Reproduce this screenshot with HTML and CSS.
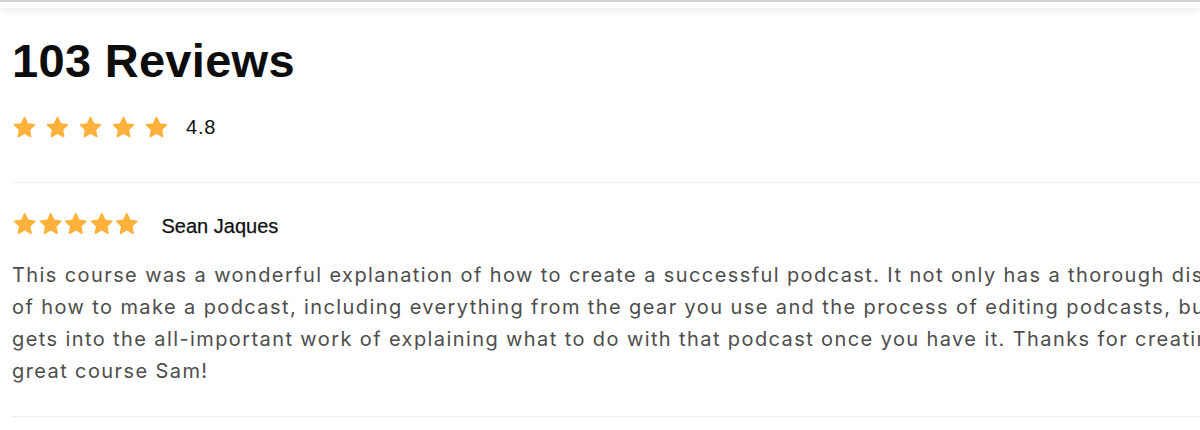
FILE: index.html
```html
<!DOCTYPE html>
<html lang="en">
<head>
<meta charset="utf-8">
<title>Reviews</title>
<link rel="stylesheet" href="styles.css">
</head>
<body>
<div class="topbar"></div>
<main class="reviews">
  <h1 class="title">103 Reviews</h1>
  <div class="summary">
    <div class="stars stars-lg">
      <svg viewBox="0 0 24 24"><path d="M12 2.5l2.9 6.1 6.6.8-4.9 4.6 1.3 6.6L12 17.3l-5.9 3.3 1.3-6.6-4.9-4.6 6.6-.8z"/></svg>
      <svg viewBox="0 0 24 24"><path d="M12 2.5l2.9 6.1 6.6.8-4.9 4.6 1.3 6.6L12 17.3l-5.9 3.3 1.3-6.6-4.9-4.6 6.6-.8z"/></svg>
      <svg viewBox="0 0 24 24"><path d="M12 2.5l2.9 6.1 6.6.8-4.9 4.6 1.3 6.6L12 17.3l-5.9 3.3 1.3-6.6-4.9-4.6 6.6-.8z"/></svg>
      <svg viewBox="0 0 24 24"><path d="M12 2.5l2.9 6.1 6.6.8-4.9 4.6 1.3 6.6L12 17.3l-5.9 3.3 1.3-6.6-4.9-4.6 6.6-.8z"/></svg>
      <svg viewBox="0 0 24 24"><path d="M12 2.5l2.9 6.1 6.6.8-4.9 4.6 1.3 6.6L12 17.3l-5.9 3.3 1.3-6.6-4.9-4.6 6.6-.8z"/></svg>
    </div>
    <span class="score">4.8</span>
  </div>
  <article class="review">
    <div class="review-head">
      <div class="stars stars-sm">
        <svg viewBox="0 0 24 24"><path d="M12 2.5l2.9 6.1 6.6.8-4.9 4.6 1.3 6.6L12 17.3l-5.9 3.3 1.3-6.6-4.9-4.6 6.6-.8z"/></svg>
        <svg viewBox="0 0 24 24"><path d="M12 2.5l2.9 6.1 6.6.8-4.9 4.6 1.3 6.6L12 17.3l-5.9 3.3 1.3-6.6-4.9-4.6 6.6-.8z"/></svg>
        <svg viewBox="0 0 24 24"><path d="M12 2.5l2.9 6.1 6.6.8-4.9 4.6 1.3 6.6L12 17.3l-5.9 3.3 1.3-6.6-4.9-4.6 6.6-.8z"/></svg>
        <svg viewBox="0 0 24 24"><path d="M12 2.5l2.9 6.1 6.6.8-4.9 4.6 1.3 6.6L12 17.3l-5.9 3.3 1.3-6.6-4.9-4.6 6.6-.8z"/></svg>
        <svg viewBox="0 0 24 24"><path d="M12 2.5l2.9 6.1 6.6.8-4.9 4.6 1.3 6.6L12 17.3l-5.9 3.3 1.3-6.6-4.9-4.6 6.6-.8z"/></svg>
      </div>
      <span class="author">Sean Jaques</span>
    </div>
    <p class="review-text">This course was a wonderful explanation of how to create a successful podcast. It not only has a thorough discussion<br>of how to make a podcast, including everything from the gear you use and the process of editing podcasts, but it also<br>gets into the all-important work of explaining what to do with that podcast once you have it. Thanks for creating such a<br>great course Sam!</p>
  </article>
</main>
</body>
</html>
```

FILE: styles.css
```css
html, body {
  margin: 0;
  padding: 0;
  background: #ffffff;
  overflow: hidden;
}

body {
  width: 1200px;
  height: 430px;
  font-family: "Liberation Sans", Arial, sans-serif;
  color: #111111;
}

.topbar {
  height: 8px;
  border-top: 2px solid #d2d2d2;
  box-sizing: border-box;
  box-shadow: 0 3px 7px rgba(0, 0, 0, 0.07);
}

.reviews {
  padding: 0 0 0 12px;
  width: 1500px;
}

.title {
  margin: 0;
  padding-top: 26px;
  font-size: 47px;
  line-height: 54px;
  font-weight: 700;
  letter-spacing: 0.3px;
  color: #0d0d0d;
}

.summary {
  display: flex;
  align-items: center;
  gap: 17px;
  margin-top: 27px;
  padding-bottom: 42px;
  border-bottom: 1px solid #eeeeee;
}

.stars {
  display: flex;
}

.stars svg {
  display: block;
  fill: #ffb13b;
  stroke: #ffb13b;
  stroke-width: 1.6;
  stroke-linejoin: round;
}

.stars-lg {
  gap: 8px;
}

.stars-lg svg {
  width: 25px;
  height: 25px;
}

.stars-sm svg {
  width: 25.5px;
  height: 26px;
}

.score {
  font-size: 20px;
  letter-spacing: 0.8px;
  color: #111111;
}

.review {
  padding-top: 27px;
  padding-bottom: 29px;
  border-bottom: 1px solid #eeeeee;
}

.review-head {
  display: flex;
  align-items: center;
  gap: 22px;
}

.author {
  margin-top: 5px;
  font-size: 20px;
  color: #111111;
  -webkit-text-stroke: 0.25px #111111;
}

.review-text {
  margin: 21px 0 0;
  font-family: "Inter", sans-serif;
  font-size: 20px;
  line-height: 32px;
  letter-spacing: 1.4px;
  color: #4d4d4d;
  white-space: nowrap;
}
```
